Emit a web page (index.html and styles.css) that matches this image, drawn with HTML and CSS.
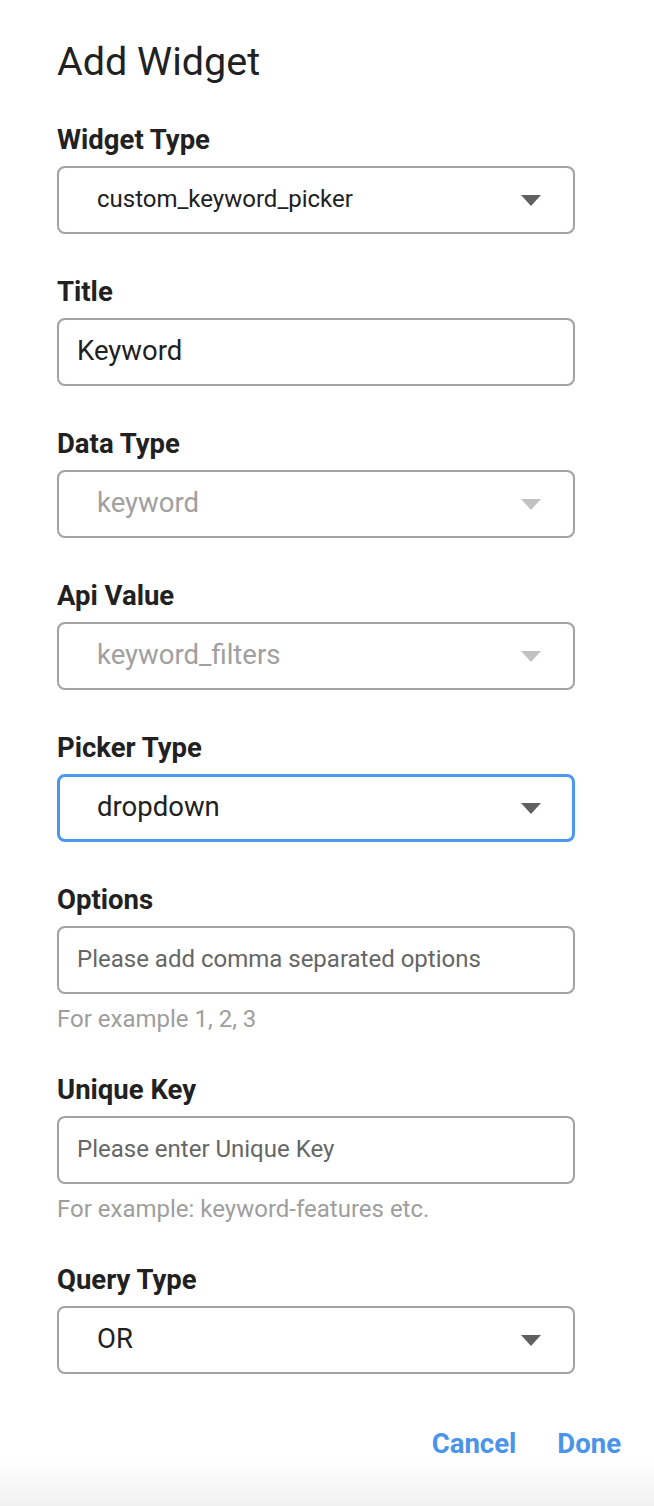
FILE: index.html
```html
<!DOCTYPE html>
<html>
<head>
<meta charset="utf-8">
<link rel="stylesheet" href="styles.css">
</head>
<body>
<div class="dialog">
  <h1 class="title">Add Widget</h1>
  <div class="form">
    <div class="field">
      <div class="label">Widget Type</div>
      <div class="control select">
        <span class="value value-sm">custom_keyword_picker</span>
        <span class="arrow"></span>
      </div>
    </div>
    <div class="field">
      <div class="label">Title</div>
      <div class="control input">
        <span class="value">Keyword</span>
      </div>
    </div>
    <div class="field">
      <div class="label">Data Type</div>
      <div class="control select disabled">
        <span class="value">keyword</span>
        <span class="arrow"></span>
      </div>
    </div>
    <div class="field">
      <div class="label">Api Value</div>
      <div class="control select disabled">
        <span class="value">keyword_filters</span>
        <span class="arrow"></span>
      </div>
    </div>
    <div class="field">
      <div class="label">Picker Type</div>
      <div class="control select focused">
        <span class="value">dropdown</span>
        <span class="arrow"></span>
      </div>
    </div>
    <div class="field">
      <div class="label">Options</div>
      <div class="control input">
        <span class="placeholder">Please add comma separated options</span>
      </div>
      <div class="helper">For example 1, 2, 3</div>
    </div>
    <div class="field">
      <div class="label">Unique Key</div>
      <div class="control input">
        <span class="placeholder">Please enter Unique Key</span>
      </div>
      <div class="helper">For example: keyword-features etc.</div>
    </div>
    <div class="field">
      <div class="label">Query Type</div>
      <div class="control select">
        <span class="value">OR</span>
        <span class="arrow"></span>
      </div>
    </div>
  </div>
  <div class="actions">
    <button class="btn">Cancel</button>
    <button class="btn">Done</button>
  </div>
</div>
</body>
</html>
```
FILE: styles.css
```css
html, body {
  margin: 0;
  padding: 0;
}
body {
  width: 654px;
  height: 1506px;
  overflow: hidden;
  font-family: Roboto, "Liberation Sans", sans-serif;
  color: #212121;
  background: linear-gradient(to bottom, #ffffff 0, #ffffff 1460px, #f1f1f1 1506px);
}
.dialog {
  padding: 40px 33px 0 57px;
}
.title {
  margin: 0 0 42px;
  font-size: 39.5px;
  line-height: 44px;
  font-weight: 400;
  color: #212121;
}
.form {
  display: flex;
  flex-direction: column;
  gap: 44px;
  width: 518px;
}
.field {
  display: flex;
  flex-direction: column;
}
.label {
  font-size: 27.5px;
  line-height: 28px;
  font-weight: 700;
  margin-bottom: 12px;
  color: #212121;
}
.control {
  box-sizing: border-box;
  height: 68px;
  border: 2px solid #a2a2a2;
  border-radius: 8px;
  display: flex;
  align-items: center;
  background: #fff;
}
.select {
  padding: 0 32px 3px 38px;
  justify-content: space-between;
}
.input {
  padding: 0 18px 3px;
}
.focused {
  border: 3px solid #4b97ec;
  padding: 0 31px 3px 37px;
}
.value {
  font-size: 27.5px;
  color: #212121;
}
.value-sm {
  font-size: 24px;
}
.disabled .value {
  color: #a0a0a0;
}
.placeholder {
  font-size: 24px;
  color: #666666;
}
.arrow {
  width: 0;
  height: 0;
  margin-top: 3px;
  border-left: 10px solid transparent;
  border-right: 10px solid transparent;
  border-top: 11px solid #616161;
}
.disabled .arrow {
  border-top-color: #c2c2c2;
}
.helper {
  margin-top: 13px;
  font-size: 24px;
  line-height: 25px;
  color: #9e9e9e;
}
.actions {
  display: flex;
  justify-content: flex-end;
  gap: 41px;
  margin-top: 56px;
}
.btn {
  border: 0;
  background: none;
  padding: 0;
  font-family: Roboto, "Liberation Sans", sans-serif;
  font-size: 27.5px;
  line-height: 28px;
  font-weight: 700;
  color: #4a94ea;
  cursor: pointer;
}
```
